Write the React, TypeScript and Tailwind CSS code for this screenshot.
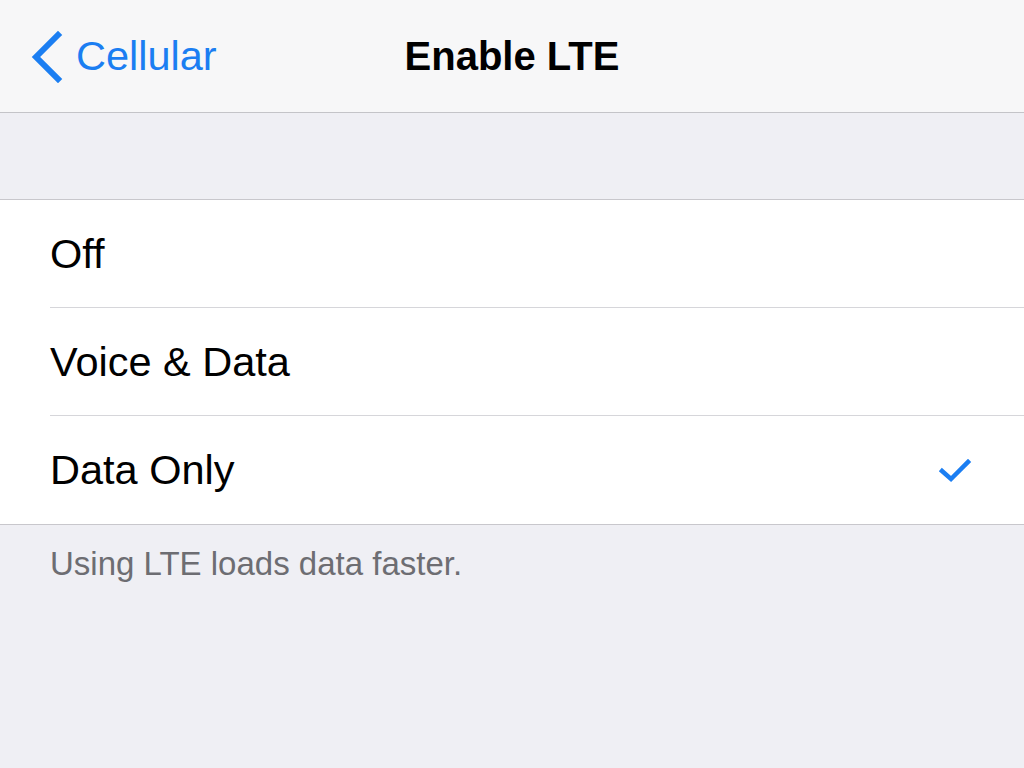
export default function App() {
  const rows = [
    {id: 1, label: 'Off', checked: false},
    {id: 2, label: 'Voice & Data', checked: false},
    {id: 3, label: 'Data Only', checked: true},
  ];

  return (
    <div className="w-[1024px] h-[768px] bg-[#efeff4] overflow-hidden" style={{fontFamily: '"Liberation Sans", Arial, sans-serif'}}>
      {/* Nav bar */}
      <div className="h-[113px] bg-[#f7f7f8] border-b border-[#c4c4c8] flex items-center relative">
        <div className="flex items-center pl-[30px] text-[#1b7ef2]">
          <svg width="34" height="54" viewBox="0 0 34 54" fill="none" stroke="currentColor" strokeWidth={6} strokeLinecap="square">
            <path d="M28 6L6 28l22 22" />
          </svg>
          <span className="ml-[12px] text-[41.5px] leading-none">Cellular</span>
        </div>
        <div className="absolute left-0 right-0 top-0 bottom-0 flex items-center justify-center pointer-events-none">
          <span className="text-[40px] font-bold text-black leading-none">Enable LTE</span>
        </div>
      </div>

      <div className="h-[86px]" />

      {/* Options */}
      <div className="bg-white border-t border-b border-[#c8c7cc]">
        {rows.map((row, index) => (
          <div key={row.id} className="pl-[50px]">
            <div className={`h-[108px] flex items-center pr-[52px] ${index < rows.length - 1 ? 'border-b border-[#d6d6da]' : ''}`}>
              <span className="flex-1 text-[41.5px] text-black leading-none">{row.label}</span>
              {row.checked && (
                <svg width="34" height="28" viewBox="0 0 34 28" fill="none" stroke="#1b7ef2" strokeWidth={4.5} strokeLinecap="square">
                  <path d="M4 15l9 8L30 6" />
                </svg>
              )}
            </div>
          </div>
        ))}
      </div>

      {/* Footer */}
      <div className="pl-[50px] pt-[22px]">
        <span className="text-[33px] text-[#6d6d72] leading-none">Using LTE loads data faster.</span>
      </div>
    </div>
  );
}
